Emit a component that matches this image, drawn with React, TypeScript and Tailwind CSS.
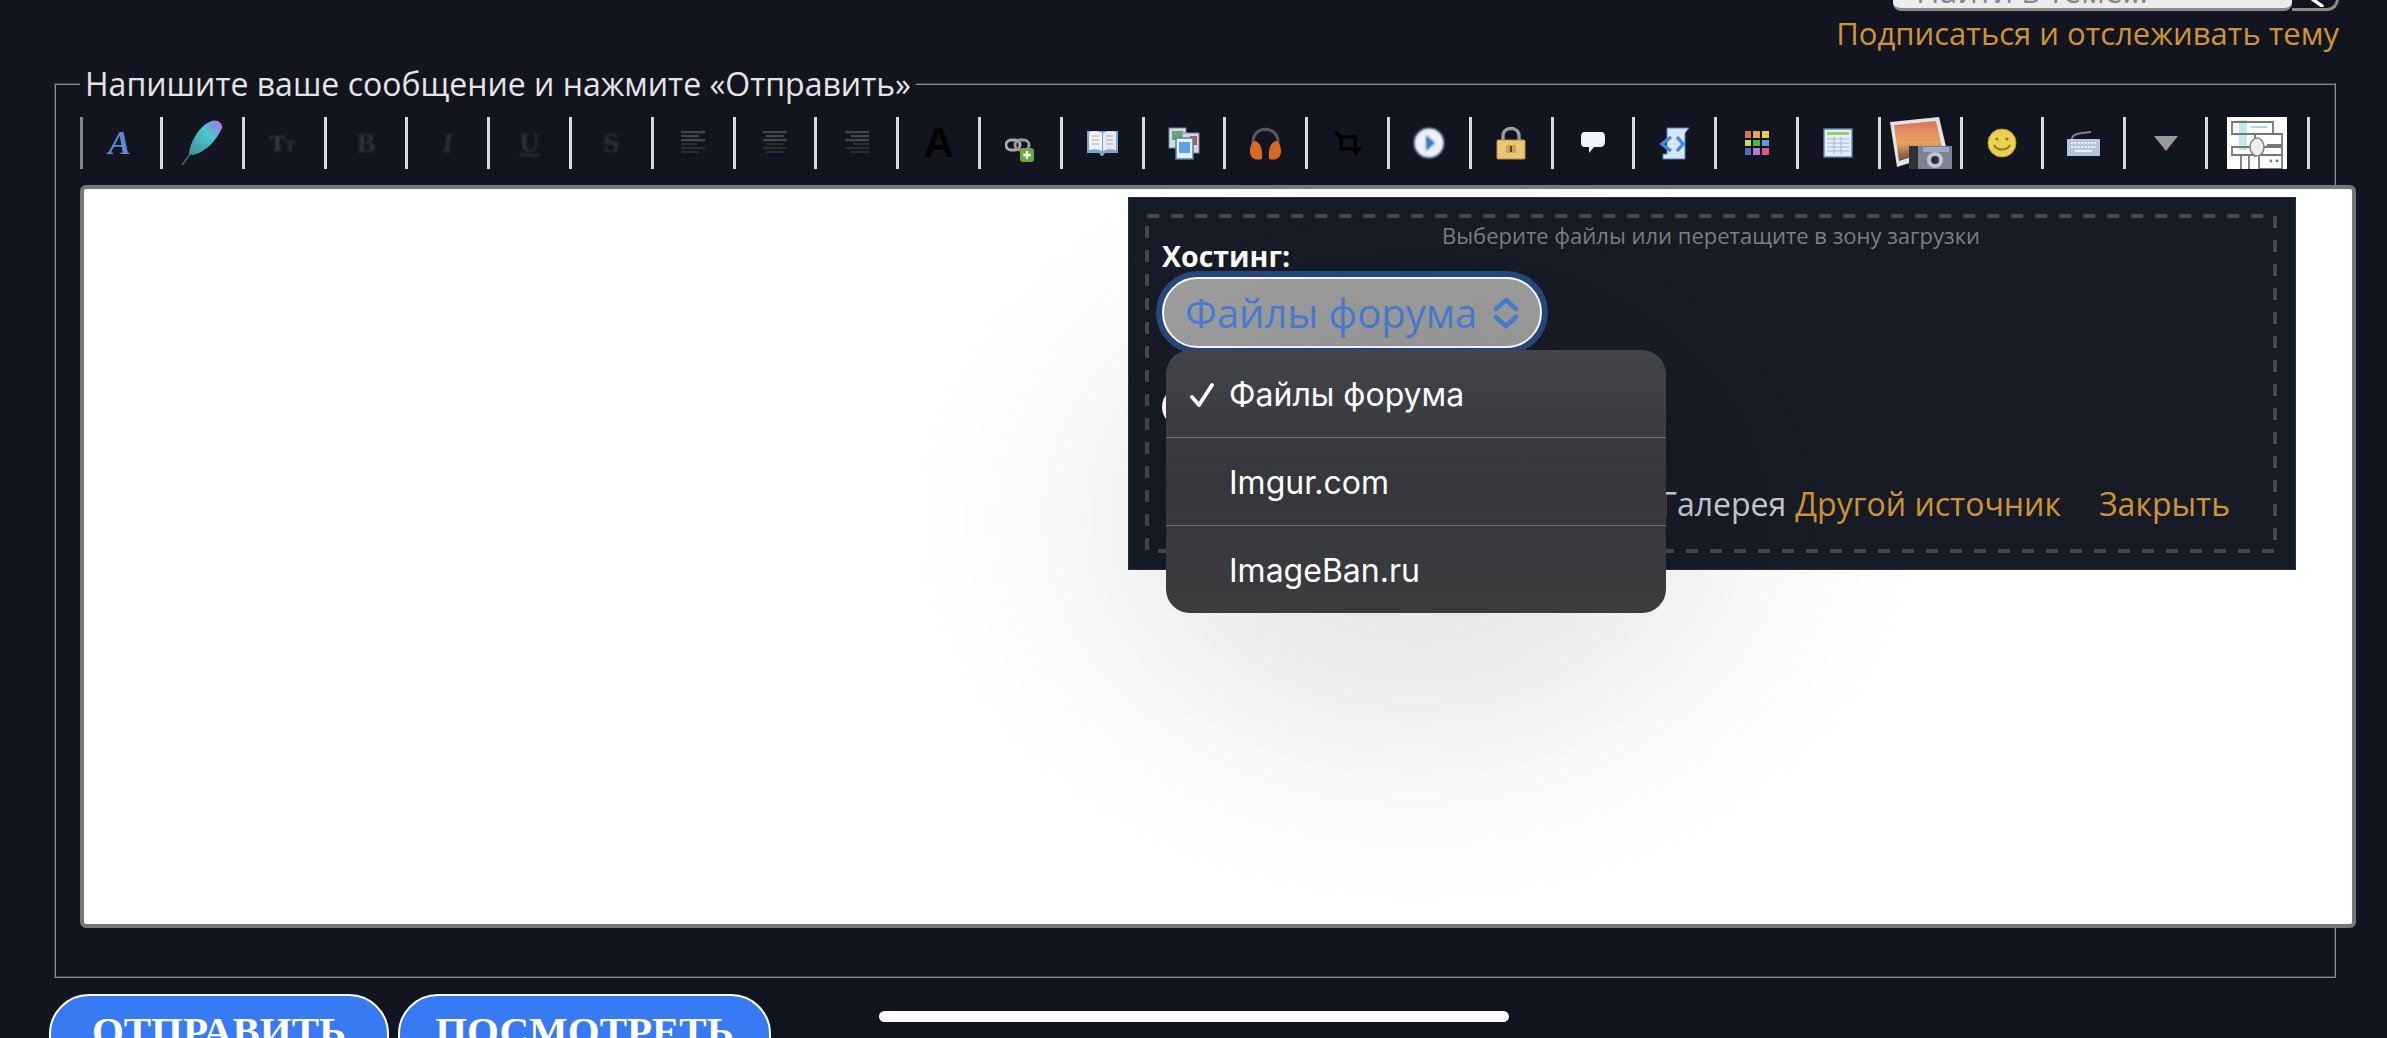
import { ReactNode } from "react";

const orange = "text-[#cf9434]";

function Lines({ align }: { align: "left" | "center" | "right" }) {
  const widths = [24, 18, 24, 16, 24, 18];
  return (
    <svg width="26" height="26" viewBox="0 0 26 26" className="blur-[0.5px]">
      {widths.map((w, i) => {
        const x = align === "left" ? 1 : align === "center" ? 13 - w / 2 : 25 - w;
        return <rect key={i} x={x} y={1 + i * 4} width={w} height="2.2" fill={i < 3 ? "#44464b" : "#2b2d31"} />;
      })}
    </svg>
  );
}

function Feather() {
  return (
    <svg width="42" height="47" viewBox="0 0 42 47" className="blur-[0.5px] -translate-y-[1px]">
      <defs>
        <linearGradient id="feather" x1="0" y1="1" x2="1" y2="0">
          <stop offset="0" stopColor="#3f8f96" />
          <stop offset="0.6" stopColor="#4fc4cf" />
          <stop offset="0.85" stopColor="#8c8fe0" />
          <stop offset="1" stopColor="#d468e8" />
        </linearGradient>
      </defs>
      <path d="M1 46 L13 30" stroke="#5a5f63" strokeWidth="1.6" />
      <path d="M8 35 C9 22 20 5 31 2 C37 0 42 5 41 9 C36 20 26 33 12 36 Z" fill="url(#feather)" />
    </svg>
  );
}

function LinkAdd() {
  return (
    <svg width="30" height="26" viewBox="0 0 30 26" className="blur-[0.6px] translate-y-[8px]">
      <rect x="1" y="2" width="14" height="10" rx="5" fill="none" stroke="#aaa" strokeWidth="3" />
      <rect x="10" y="2" width="14" height="10" rx="5" fill="none" stroke="#999" strokeWidth="3" />
      <rect x="15" y="10" width="14" height="14" rx="3" fill="#68a83c" />
      <path d="M22 13v8M18 17h8" stroke="#fff" strokeWidth="2.4" />
    </svg>
  );
}

function Book() {
  return (
    <svg width="33" height="29" viewBox="0 0 33 29" className="blur-[0.6px]">
      <path d="M1 2 H32 V24 H19 L17 27 H15 L13 24 H1 Z" fill="#7da6cf" />
      <path d="M3 3 C8 1 12 2 16 4 V22 C12 20 8 20 3 21 Z" fill="#f0f2f2" />
      <path d="M30 3 C25 1 21 2 17 4 V22 C21 20 25 20 30 21 Z" fill="#e9ebec" />
      <path d="M6 7h7M6 11h7M6 15h7M20 7h7M20 11h7M20 15h7" stroke="#bfc4c8" strokeWidth="1.4" />
    </svg>
  );
}

function Gallery() {
  return (
    <svg width="32" height="33" viewBox="0 0 32 33" className="blur-[0.6px]">
      <rect x="1" y="1" width="17" height="20" fill="#d4dde8" stroke="#6b8cb4" />
      <rect x="4" y="4" width="11" height="9" fill="#6fa56a" />
      <rect x="14" y="6" width="17" height="20" fill="#d8d4d8" stroke="#6b8cb4" />
      <rect x="22" y="9" width="7" height="9" fill="#b55a5a" />
      <rect x="8" y="11" width="17" height="21" fill="#e9f0f8" stroke="#4f7fb8" strokeWidth="1.5" />
      <rect x="11" y="15" width="11" height="11" fill="#5ba2e2" />
    </svg>
  );
}

function Headphones() {
  return (
    <svg width="31" height="33" viewBox="0 0 31 33" className="blur-[0.6px]">
      <path d="M3 22 V15 C3 -2 28 -2 28 15 V22" fill="none" stroke="#55585c" strokeWidth="3" />
      <path d="M5 14 C10 15 13 22 12 32 C5 34 0 31 0 24 C0 19 2 15 5 14 Z M26 14 C21 15 18 22 19 32 C26 34 31 31 31 24 C31 19 29 15 26 14 Z" fill="#d76a25" />
    </svg>
  );
}

function Crop() {
  return (
    <svg width="28" height="26" viewBox="0 0 28 26" className="blur-[0.7px]">
      <path d="M1 2 L7 7 H21 V22 M7 7 V19 H27 M22 19 V25" fill="none" stroke="#000" strokeWidth="3.6" />
    </svg>
  );
}

function Play() {
  return (
    <svg width="32" height="32" viewBox="0 0 32 32" className="blur-[0.8px]">
      <circle cx="16" cy="16" r="15" fill="#eef2f8" stroke="#4f74a8" strokeWidth="1" />
      <path d="M13 8 L22 16 L13 24 Z" fill="#3f75bb" />
    </svg>
  );
}

function Lock() {
  return (
    <svg width="30" height="34" viewBox="0 0 30 34" className="blur-[0.5px]">
      <path d="M7 15 V10 C7 0 23 0 23 10 V15" fill="none" stroke="#9a9c9e" strokeWidth="3.4" />
      <rect x="1" y="14" width="28" height="19" rx="1" fill="#e9c873" stroke="#b18f45" />
      <rect x="10" y="19" width="10" height="8" fill="#c9a455" />
      <rect x="14" y="20" width="2" height="6" fill="#4f4326" />
    </svg>
  );
}

function Bubble() {
  return (
    <svg width="26" height="24" viewBox="0 0 26 24" className="blur-[0.6px]">
      <path d="M5 1 H21 C24 1 25 3 25 6 V11 C25 14 23 16 20 16 H14 L9 22 V16 H5 C2 16 1 14 1 11 V6 C1 3 2 1 5 1 Z" fill="#f0f3fa" />
    </svg>
  );
}

function Script() {
  return (
    <svg width="31" height="33" viewBox="0 0 31 33" className="blur-[0.6px]">
      <path d="M8 1 H30 L26 6 V32 H4 V27 H8 Z" fill="#d9e6f7" stroke="#4a84d0" />
      <path d="M12 10 L3 17 L12 24 M18 10 L24 17 L18 24" fill="none" stroke="#3b8ae6" strokeWidth="3.4" />
    </svg>
  );
}

function Palette() {
  const colors = ["#e06a5c", "#e5a052", "#e5cf4d", "#bcd96e", "#4fb34f", "#4f9fdf", "#4f6fa8", "#b877d1", "#e0558f"];
  return (
    <div className="grid w-[24px] grid-cols-3 gap-[2px] blur-[0.4px]">
      {colors.map((c) => (
        <span key={c} className="h-[6.5px]" style={{ background: c }} />
      ))}
    </div>
  );
}

function Table() {
  return (
    <svg width="30" height="30" viewBox="0 0 30 30" className="blur-[0.5px]">
      <rect x="1" y="1" width="28" height="28" fill="#e4edf8" stroke="#5f86b8" strokeWidth="1.4" />
      <rect x="4" y="4" width="22" height="3" fill="#9ccb6a" />
      <path d="M4 11H26M4 15H26M4 19H26M4 23H26M11 9V26M18 9V26" stroke="#9fb9d8" strokeWidth="1" />
    </svg>
  );
}

function PhotoCamera() {
  return (
    <svg width="63" height="52" viewBox="0 0 63 52" className="blur-[0.4px]">
      <defs>
        <linearGradient id="sunset" x1="0" y1="0" x2="0" y2="1">
          <stop offset="0" stopColor="#d9785f" />
          <stop offset="0.55" stopColor="#e8a35e" />
          <stop offset="1" stopColor="#5f4a44" />
        </linearGradient>
      </defs>
      <path d="M1 5 L50 0 L58 34 L8 50 Z" fill="#e4e4e6" />
      <path d="M5 8 L47 4 L53 30 L10 44 Z" fill="url(#sunset)" />
      <rect x="20" y="29" width="43" height="23" fill="#7b8292" />
      <rect x="20" y="29" width="9" height="23" fill="#2e3136" />
      <rect x="34" y="30" width="26" height="5" fill="#9da9c4" />
      <circle cx="46" cy="43" r="8" fill="#c1c5ce" />
      <circle cx="46" cy="43" r="4" fill="#2c3442" />
    </svg>
  );
}

function Smiley() {
  return (
    <svg width="30" height="30" viewBox="0 0 30 30" className="blur-[0.6px]">
      <circle cx="15" cy="15" r="14" fill="#ecd050" stroke="#b89a35" strokeWidth="1" />
      <circle cx="10" cy="11" r="1.6" fill="#8f7a25" />
      <circle cx="20" cy="11" r="1.6" fill="#8f7a25" />
      <path d="M7 17 C10 23 20 23 23 17" fill="none" stroke="#8f7a25" strokeWidth="1.8" />
    </svg>
  );
}

function Keyboard() {
  return (
    <svg width="33" height="26" viewBox="0 0 33 26" className="blur-[0.6px]">
      <path d="M5 9 C5 4 12 3 24 2" fill="none" stroke="#7d8288" strokeWidth="2" />
      <rect x="0" y="9" width="33" height="17" rx="1" fill="#b4c6e2" />
      <path d="M4 13h25M4 17h25" stroke="#eef3fa" strokeWidth="2" strokeDasharray="2 1.4" />
      <path d="M8 21h17" stroke="#eef3fa" strokeWidth="2" />
    </svg>
  );
}

function Sitemap() {
  return (
    <svg width="60" height="52" viewBox="0 0 60 52" className="bg-white blur-[0.5px]">
      <rect x="12" y="3" width="8" height="30" fill="#bdebe9" />
      <path d="M24 10 H40" stroke="#9fdedb" strokeWidth="2" />
      <path d="M5 5 H46 V17 H5 Z M40 17 H55 V28 H40 M28 17 V40 M5 30 H55 V38 H5 Z M14 38 V52 M22 38 V52 M32 38 V52 H55 V38" fill="none" stroke="#777" strokeWidth="1.8" />
      <ellipse cx="30" cy="30" rx="7" ry="9" fill="#eee" stroke="#888" strokeWidth="1.6" />
      <circle cx="44" cy="44" r="1.4" fill="#777" />
      <circle cx="50" cy="44" r="1.4" fill="#777" />
    </svg>
  );
}

const tools: { icon: ReactNode; wide?: boolean }[] = [
  { icon: <span className="-ml-[4px] font-['Liberation_Serif',serif] text-[34px] font-bold italic leading-none text-[#5d88d6] blur-[0.6px]">A</span> },
  { icon: <Feather /> },
  { icon: <span className="-ml-[4px] font-['Liberation_Serif',serif] text-[24px] font-bold leading-none text-[#3a3c40] blur-[0.8px]">T<span className="text-[14px]">T</span></span> },
  { icon: <span className="font-['Liberation_Serif',serif] text-[28px] font-bold leading-none text-[#303236] blur-[0.8px]">B</span> },
  { icon: <span className="font-['Liberation_Serif',serif] text-[28px] font-bold italic leading-none text-[#303236] blur-[0.8px]">I</span> },
  { icon: <span className="font-['Liberation_Serif',serif] text-[28px] font-bold leading-none text-[#303236] underline blur-[0.8px]">U</span> },
  { icon: <span className="font-['Liberation_Serif',serif] text-[28px] font-bold leading-none text-[#303236] line-through blur-[0.8px]">S</span> },
  { icon: <Lines align="left" /> },
  { icon: <Lines align="center" /> },
  { icon: <Lines align="right" /> },
  { icon: <span className="font-['Liberation_Sans',sans-serif] text-[42px] font-bold leading-none text-black blur-[0.7px]">A</span> },
  { icon: <LinkAdd /> },
  { icon: <Book /> },
  { icon: <Gallery /> },
  { icon: <Headphones /> },
  { icon: <Crop /> },
  { icon: <Play /> },
  { icon: <Lock /> },
  { icon: <Bubble /> },
  { icon: <Script /> },
  { icon: <Palette /> },
  { icon: <Table /> },
  { icon: <PhotoCamera /> },
  { icon: <Smiley /> },
  { icon: <Keyboard /> },
  { icon: <div className="h-0 w-0 border-x-[12px] border-t-[15px] border-x-transparent border-t-[#9a9a9c] blur-[0.6px]" /> },
  { icon: <Sitemap />, wide: true },
];

function Toolbar() {
  return (
    <div className="mt-[11px] flex h-[52px] items-stretch">
      {tools.map((t, i) => (
        <div
          key={i}
          className={`flex shrink-0 items-center justify-center border-l-[3px] ${i === 0 ? "border-l-[#85878c]" : "border-l-[#d8dbe2]"} ${t.wide ? "w-[102px]" : i === 0 ? "w-[80px]" : "w-[81.8px]"}`}
        >
          {t.icon}
        </div>
      ))}
      <div className="w-0 border-l-[3px] border-l-[#d8dbe2]" />
    </div>
  );
}

function UploadPanel() {
  return (
    <div className="absolute left-[1044px] top-[8px] h-[373px] w-[1168px] border border-[#2a2e38] bg-[#171b26] pb-[16px] pl-[16px] pr-[17px] pt-[16px]">
      <div className="relative flex h-full flex-col pb-[29px] pl-[17px] pr-[48px] pt-[9px]">
        <svg className="absolute inset-0 h-full w-full" fill="none">
          <rect x="2" y="2" width="1128" height="335" stroke="#434853" strokeWidth="4" strokeDasharray="12 12" />
        </svg>
        <p className="ml-[30px] text-center text-[22px] leading-[24px] text-[#7d7f85]">Выберите файлы или перетащите в зону загрузки</p>
        <label className="-mt-[2px] text-[28.5px] font-bold leading-[22px] text-white">Хостинг:</label>
        <div className="mt-[10px] flex h-[71px] w-[380px] items-center justify-between rounded-full border-2 border-white bg-[#9f9f9f] pl-[21px] pr-[20px] text-[40px] text-[#4a7fd6] ring-[6px] ring-[#26497f]">
          <span>Файлы форума</span>
          <svg width="28" height="32" viewBox="0 0 28 32" fill="none" stroke="#4a7fd6" strokeWidth="4.6" strokeLinecap="round" strokeLinejoin="round">
            <path d="M4 12 L14 3 L24 12 M4 20 L14 29 L24 20" />
          </svg>
        </div>
        <div className="mt-[39px] h-[40px] w-[100px] rounded-full bg-white" />
        <div className="mt-auto flex justify-end text-[32px] leading-[40px]">
          <span className="text-[#c8ccd0]">Галерея</span>
          <span className={`ml-[9px] ${orange}`}>Другой источник</span>
          <span className={`ml-[38px] ${orange}`}>Закрыть</span>
        </div>
      </div>
    </div>
  );
}

function HostMenu() {
  const items = ["Файлы форума", "Imgur.com", "ImageBan.ru"];
  return (
    <div className="absolute left-[1082px] top-[161px] flex h-[263px] w-[500px] flex-col rounded-[24px] bg-gradient-to-b from-[#42444a] via-[#35373c] to-[#3c3c3e] font-['Inter',sans-serif] text-[32px] text-white">
      {items.map((item, i) => (
        <div key={item} className={`relative flex flex-1 items-center pl-[63px] pt-[2px] ${i < 2 ? "border-b border-b-[#6d6e72]" : ""}`}>
          {i === 0 && (
            <svg width="26" height="24" viewBox="0 0 26 24" className="absolute left-[23px]" fill="none" stroke="#fff" strokeWidth="3.8" strokeLinecap="round" strokeLinejoin="round">
              <path d="M3 14 L10 22 L23 2" />
            </svg>
          )}
          {item}
        </div>
      ))}
    </div>
  );
}

export default function App() {
  return (
    <div className="relative h-[1038px] w-[2387px] overflow-hidden bg-[#12151f] font-['Open_Sans','Noto_Sans',sans-serif]">
      <div className="flex h-[11px] justify-end pr-[48px]">
        <div className="-mt-[40px] flex h-[51px] w-[399px] items-end rounded-b-lg border-b-[3px] border-b-[#8a8a8a] bg-[#ececec] pl-[23px] text-[32px] leading-[60px] text-[#888]">
          <span className="translate-y-[13px]">Найти в теме...</span>
        </div>
        <div className="-mt-[40px] flex h-[51px] w-[47px] items-end overflow-hidden rounded-br-xl border-b-[3px] border-r-[3px] border-[#8a8a8a] pb-[1px] pl-[14px]">
          <svg width="20" height="11" viewBox="0 0 20 11" fill="none" stroke="#fff" strokeWidth="3.4" strokeLinecap="round">
            <path d="M2 0 L16 10" />
          </svg>
        </div>
      </div>
      <div className={`mr-[48px] text-right text-[31px] leading-[44px] ${orange}`}>Подписаться и отслеживать тему</div>

      <fieldset className="ml-[54px] mt-[7px] w-[2282px] min-w-0 border-2 border-[#8c8c9c] pb-[48px] pl-[24px] [border-style:groove]">
        <legend className="px-[5px] text-[32px] leading-[44px] text-[#e5e5e5]">Напишите ваше сообщение и нажмите «Отправить»</legend>
        <Toolbar />
        <div className="relative mt-[16px] h-[743px] w-[2276px] overflow-hidden rounded-md border-4 border-[#777] bg-white">
          <UploadPanel />
          <div className="absolute left-[822px] top-[-60px] h-[780px] w-[1020px] bg-[radial-gradient(closest-side,rgba(0,0,0,0.11),rgba(0,0,0,0.075)_40%,rgba(0,0,0,0.025)_72%,rgba(0,0,0,0))]" />
          <HostMenu />
        </div>
      </fieldset>

      <div className="ml-[49px] mt-[16px] flex gap-[9px] font-['Liberation_Serif',serif] text-[41px] font-bold text-white">
        <button className="flex h-[90px] w-[340px] items-start justify-center rounded-[40px] border-2 border-white bg-[#377af3] pt-[10px] leading-[50px]">ОТПРАВИТЬ</button>
        <button className="flex h-[90px] w-[373px] items-start justify-center rounded-[40px] border-2 border-white bg-[#377af3] pt-[10px] leading-[50px]">ПОСМОТРЕТЬ</button>
      </div>

      <div className="absolute bottom-[16px] left-[879px] h-[11px] w-[630px] rounded-full bg-white" />
    </div>
  );
}
